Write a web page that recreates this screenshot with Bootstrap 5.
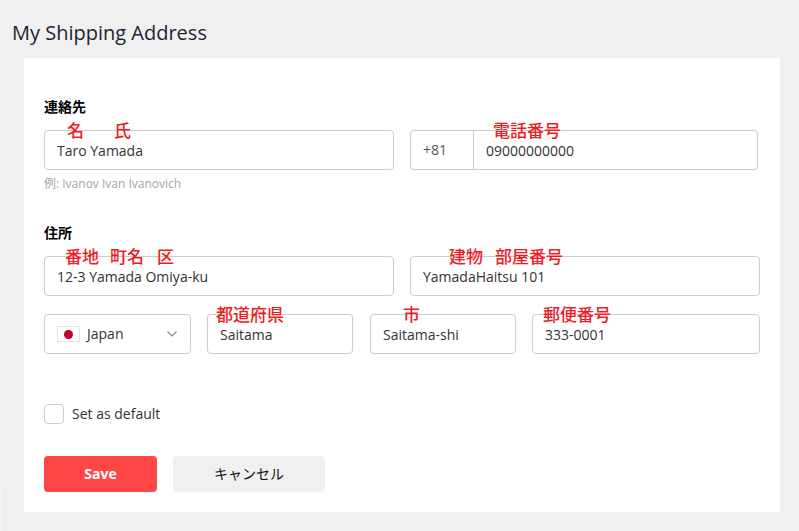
<!doctype html>
<html lang="ja">
<head>
<meta charset="utf-8">
<title>My Shipping Address</title>
<link href="https://cdn.jsdelivr.net/npm/bootstrap@5.3.0/dist/css/bootstrap.min.css" rel="stylesheet">
<style>
html,body{height:100%;overflow:hidden}
body{background:#f0f0f0;font-family:"Open Sans","Noto Sans CJK JP",sans-serif;color:#333;font-size:14px;line-height:20px}
body::after{content:"";position:absolute;left:1px;top:487px;bottom:0;width:1px;background:#fafafa}
.page-title{font-size:20px;line-height:28px;font-weight:400;margin:0;padding:19px 0 0 12px;color:#1d2433;height:58px}
.sheet{background:#fff;margin:0 19px 0 24px;height:454px;padding:40px 20px 0}
.sect-label{font-size:14px;line-height:18px;font-weight:700;color:#000;margin:0}
.fld{position:relative;height:40px}
.fld .form-control,.fld .phone-box,.fld .form-select-like{height:40px}
.form-control{font-size:14px;line-height:20px;color:#333;border:1px solid #ccc;border-radius:4px;padding:9px 12px;box-shadow:none}
.tag{position:absolute;top:-8px;font-size:17px;line-height:16px;color:#ed1c24;font-weight:500;font-family:"Noto Sans CJK JP",sans-serif;white-space:nowrap}
.w-a{width:350px}.w-b{width:348px}.w-c{width:350px}
.w-d{width:147px}.w-e{width:146px}.w-e2{width:146px;margin-left:1px}.w-f{width:228px}
.row-one{margin-top:14px}
.hint{font-size:12px;line-height:16px;color:#a6a6a6;margin-top:6px}
.sect-two{margin-top:32px}
.row-two{margin-top:14px}
.row-three{margin-top:18px}
.phone-box{border:1px solid #ccc;border-radius:4px;background:#fff}
.phone-code{width:63px;flex:0 0 63px;border-right:1px solid #ccc;padding-left:12px;line-height:38px;color:#555}
.phone-box .form-control{border:0;height:38px;padding:9px 12px;background:transparent}
.form-select-like{border:1px solid #ccc;border-radius:4px;padding:0 12px;background:#fff}
.flag{width:23px;height:16px;border:1px solid #e4e4e4;background:#fff;margin-right:7px}
.flag i{display:block;width:9px;height:9px;border-radius:50%;background:#bc002d}
.chev{margin-left:auto}
.check-line{margin-top:48px;height:20px}
.check-line .form-check-input{width:20px;height:20px;margin:0 8px 0 0;border:1px solid #ccc;border-radius:4px;float:none}
.check-line label{color:#333;font-size:14px}
.act-row{margin-top:30px}
.btn-save{width:113px;height:36px;background:#ff4747;border:0;border-radius:4px;color:#fff;font-weight:700;font-size:14px;padding:0 0 2px}
.btn-cancel{width:152px;height:36px;background:#f0f0f0;border:0;border-radius:4px;color:#111;font-size:14px;padding:0 0 2px;font-family:"Noto Sans CJK JP",sans-serif}
.btn-save:hover{background:#ff4747;color:#fff}.btn-cancel:hover{background:#f0f0f0}
</style>
</head>
<body>
<h1 class="page-title">My Shipping Address</h1>
<div class="sheet">
  <p class="sect-label">連絡先</p>
  <div class="d-flex gap-3 row-one">
    <div class="fld w-a">
      <input class="form-control" value="Taro Yamada" aria-label="氏名">
      <span class="tag" style="left:23px">名</span><span class="tag" style="left:70px">氏</span>
    </div>
    <div class="fld w-b">
      <div class="phone-box d-flex">
        <div class="phone-code">+81</div>
        <input class="form-control flex-grow-1" value="09000000000" aria-label="電話番号">
      </div>
      <span class="tag" style="left:83px">電話番号</span>
    </div>
  </div>
  <div class="hint">例: Ivanov Ivan Ivanovich</div>

  <p class="sect-label sect-two">住所</p>
  <div class="d-flex gap-3 row-two">
    <div class="fld w-a">
      <input class="form-control" value="12-3 Yamada Omiya-ku" aria-label="番地">
      <span class="tag" style="left:21px">番地</span><span class="tag" style="left:66px">町名</span><span class="tag" style="left:113px">区</span>
    </div>
    <div class="fld w-c">
      <input class="form-control" value="YamadaHaitsu 101" aria-label="建物">
      <span class="tag" style="left:39px">建物</span><span class="tag" style="left:85px">部屋番号</span>
    </div>
  </div>
  <div class="d-flex gap-3 row-three">
    <div class="fld w-d">
      <div class="form-select-like d-flex align-items-center">
        <span class="flag d-flex align-items-center justify-content-center"><i></i></span>
        <span>Japan</span>
        <svg class="chev" width="12" height="8" viewBox="0 0 12 8" fill="none"><path d="M1.5 1.5 6 6l4.5-4.5" stroke="#8a8a8a" stroke-width="1.2"/></svg>
      </div>
    </div>
    <div class="fld w-e">
      <input class="form-control" value="Saitama" aria-label="都道府県">
      <span class="tag" style="left:9px">都道府県</span>
    </div>
    <div class="fld w-e2">
      <input class="form-control" value="Saitama-shi" aria-label="市">
      <span class="tag" style="left:33px">市</span>
    </div>
    <div class="fld w-f">
      <input class="form-control" value="333-0001" aria-label="郵便番号">
      <span class="tag" style="left:11px">郵便番号</span>
    </div>
  </div>

  <div class="form-check d-flex align-items-center check-line p-0">
    <input class="form-check-input" type="checkbox" id="dflt">
    <label class="form-check-label" for="dflt">Set as default</label>
  </div>

  <div class="d-flex gap-3 act-row">
    <button type="button" class="btn btn-save">Save</button>
    <button type="button" class="btn btn-cancel">キャンセル</button>
  </div>
</div>
<script src="https://cdn.jsdelivr.net/npm/bootstrap@5.3.0/dist/js/bootstrap.bundle.min.js"></script>
</body>
</html>
